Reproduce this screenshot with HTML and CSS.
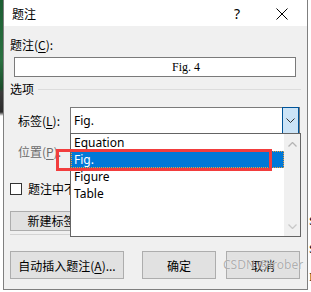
FILE: index.html
```html
<!DOCTYPE html>
<html lang="zh-CN">
  <head>
    <meta charset="UTF-8" />
    <title>题注</title>
    <link rel="stylesheet" href="styles.css">
  </head>
  <body>
    <div class="screen">
      <div class="edge-left"></div>

      <div class="dialog">
        <div class="titlebar">
          <span class="title">题注</span>
          <span class="help">?</span>
          <span class="close">
            <svg width="12" height="12" viewBox="0 0 12 12">
              <path d="M0.5 0.5 L11.5 11.5 M11.5 0.5 L0.5 11.5" stroke="#000" stroke-width="1" fill="none" />
            </svg>
          </span>
        </div>

        <div class="body">
          <div class="field-label">题注(<u>C</u>):</div>
          <div class="caption-box">Fig. 4</div>

          <div class="group-head">
            <span>选项</span>
            <i class="group-line"></i>
          </div>

          <div class="opt-row">
            <span class="opt-label">标签(<u>L</u>):</span>
            <div class="combo">
              <span class="combo-value">Fig.</span>
              <span class="combo-btn">
                <svg width="9" height="5" viewBox="0 0 9 5">
                  <path d="M0.5 0.5 L4.5 4.5 L8.5 0.5" stroke="#333" stroke-width="1" fill="none" />
                </svg>
              </span>
            </div>
          </div>

          <div class="opt-row pos-row">
            <span class="opt-label">位置(<u>P</u>):</span>
          </div>

          <div class="check-row">
            <span class="checkbox"></span>
            <span>题注中不包含标签(<u>E</u>)</span>
          </div>

          <div class="mid-buttons">
            <button class="btn btn-new">新建标签(<u>N</u>)...</button>
          </div>

          <div class="sep"></div>

          <div class="bottom-buttons">
            <button class="btn btn-auto">自动插入题注(<u>A</u>)...</button>
            <button class="btn btn-ok">确定</button>
            <button class="btn btn-cancel">取消</button>
          </div>
        </div>

        <!-- opened list of the label combo -->
        <div class="dropdown-list">
          <ul class="items">
            <li>Equation</li>
            <li class="selected">Fig.</li>
            <li>Figure</li>
            <li>Table</li>
          </ul>
          <div class="scrollbar">
            <svg width="9" height="5" viewBox="0 0 9 5">
              <path d="M0.5 4.5 L4.5 0.5 L8.5 4.5" stroke="#b4b4b4" stroke-width="1.3" fill="none" />
            </svg>
            <svg width="9" height="5" viewBox="0 0 9 5">
              <path d="M0.5 0.5 L4.5 4.5 L8.5 0.5" stroke="#c8c8c8" stroke-width="1.3" fill="none" />
            </svg>
          </div>
        </div>

        <div class="callout"></div>
        <div class="watermark">CSDN @irober</div>
      </div>

      <div class="edge-right">
        <span class="frag frag-1">S</span>
        <span class="frag frag-2">S</span>
        <span class="frag frag-3">I</span>
      </div>
    </div>
  </body>
</html>
```

FILE: styles.css
```css
* {
  box-sizing: border-box;
}
body {
  margin: 0;
  font-family: "Noto Sans", "Noto Sans CJK SC", sans-serif;
  font-size: 12px;
  color: #000;
  background: #fff;
}
.screen {
  display: flex;
  width: 311px;
  height: 292px;
  overflow: hidden;
}
.edge-left {
  width: 3px;
  background: linear-gradient(
    #1d5e33 0,
    #2a7040 60px,
    #1a4d2a 88px,
    #3a3a3a 92px,
    #2c2c2c 112px,
    #ffffff 116px
  );
}
.edge-right {
  flex: 1;
  background: #fff;
  position: relative;
  overflow: hidden;
}
.frag {
  position: absolute;
  left: 1px;
  font-family: "Liberation Serif", serif;
  font-size: 13px;
  line-height: 14px;
}
.frag-1 {
  top: 214px;
}
.frag-2 {
  top: 242px;
}
.frag-3 {
  top: 270px;
}

/* dialog */
.dialog {
  position: relative;
  width: 305px;
  height: 290px;
  background: #f0f0f0;
  border: 1px solid #7f7f7f;
  border-top: none;
}
.titlebar {
  display: flex;
  align-items: center;
  height: 26px;
  background: #fff;
  font-family: "Noto Sans CJK SC", sans-serif;
}
.title {
  padding-left: 8px;
  flex: 1;
}
.help {
  font-family: "Noto Sans", sans-serif;
  font-size: 14px;
  width: 44px;
  padding-left: 2px;
}
.close {
  display: flex;
  width: 31px;
  padding-top: 1px;
}
.body {
  font-family: "Noto Sans CJK SC", sans-serif;
  line-height: 16px;
}
u {
  text-decoration-thickness: 1px;
  text-underline-offset: 2px;
}
.field-label {
  margin-top: 11px;
  padding-left: 6px;
}
.caption-box {
  margin: 4px 0 0 10px;
  width: 282px;
  height: 20px;
  background: #fff;
  border: 1px solid #7a7a7a;
  font-family: "Liberation Serif", serif;
  font-size: 12px;
  line-height: 18px;
  padding-left: 157px;
}
.group-head {
  display: flex;
  align-items: center;
  margin-top: 4px;
  height: 16px;
  padding: 0 6px;
}
.group-line {
  flex: 1;
  height: 1px;
  margin-left: 4px;
  background: #dcdcdc;
}
.opt-row {
  display: flex;
  align-items: center;
  margin-top: 10px;
  height: 27px;
  padding-left: 14px;
}
.opt-label {
  width: 52px;
}
.combo {
  display: flex;
  width: 230px;
  height: 27px;
  background: #fff;
  border: 1px solid #7a7a7a;
}
.combo-value {
  flex: 1;
  padding-left: 3px;
  font-family: "Noto Sans", sans-serif;
  line-height: 25px;
}
.combo-btn {
  display: flex;
  align-items: center;
  justify-content: center;
  width: 17px;
  margin: -1px 0 -1px 0;
  background: #cce4f7;
  border: 1px solid #005499;
}
.pos-row {
  margin-top: 4px;
  color: #6d6d6d;
}
.check-row {
  display: flex;
  align-items: center;
  margin-top: 16px;
  padding-left: 6px;
  height: 16px;
  white-space: nowrap;
}
.checkbox {
  width: 12px;
  height: 12px;
  margin-right: 6px;
  background: #fff;
  border: 1px solid #333;
}
.mid-buttons {
  margin-top: 14px;
  padding-left: 6px;
}
.btn {
  font-family: "Noto Sans CJK SC", sans-serif;
  font-size: 12px;
  color: #000;
  background: #e1e1e1;
  border: 1px solid #adadad;
  padding: 0;
  margin: 0;
}
.btn-new {
  width: 110px;
  height: 20px;
  line-height: 18px;
}
.sep {
  margin: 3px 6px 0 6px;
  height: 1px;
  background: #d4d4d4;
}
.bottom-buttons {
  display: flex;
  margin-top: 16px;
  padding-left: 6px;
}
.bottom-buttons .btn {
  height: 28px;
}
.btn-auto {
  width: 114px;
}
.btn-ok {
  width: 74px;
  margin-left: 18px;
}
.btn-cancel {
  width: 74px;
  margin-left: 10px;
}

/* overlays */
.dropdown-list {
  position: absolute;
  left: 66px;
  top: 133px;
  width: 231px;
  height: 104px;
  display: flex;
  background: #fff;
  border: 1px solid #646464;
  font-family: "Noto Sans", sans-serif;
}
.items {
  flex: 1;
  list-style: none;
  margin: 0;
  padding: 0;
}
.items li {
  height: 17px;
  line-height: 17px;
  padding-left: 3px;
}
.items li.selected {
  background: #0078d7;
  color: #fff;
  outline: 1px dotted #e8a040;
  outline-offset: -1px;
}
.scrollbar {
  width: 16px;
  display: flex;
  flex-direction: column;
  justify-content: space-between;
  align-items: center;
  padding: 8px 0 7px;
  background: #f0f0f0;
}
.callout {
  position: absolute;
  left: 52px;
  top: 149px;
  width: 216px;
  height: 22px;
  border: 3px solid #f23d3d;
}
.watermark {
  position: absolute;
  left: 219px;
  top: 257px;
  font-family: "Noto Sans", sans-serif;
  font-size: 12px;
  line-height: 16px;
  color: rgba(110, 110, 110, 0.55);
  text-shadow: 0 0 1px #fff;
}
```
